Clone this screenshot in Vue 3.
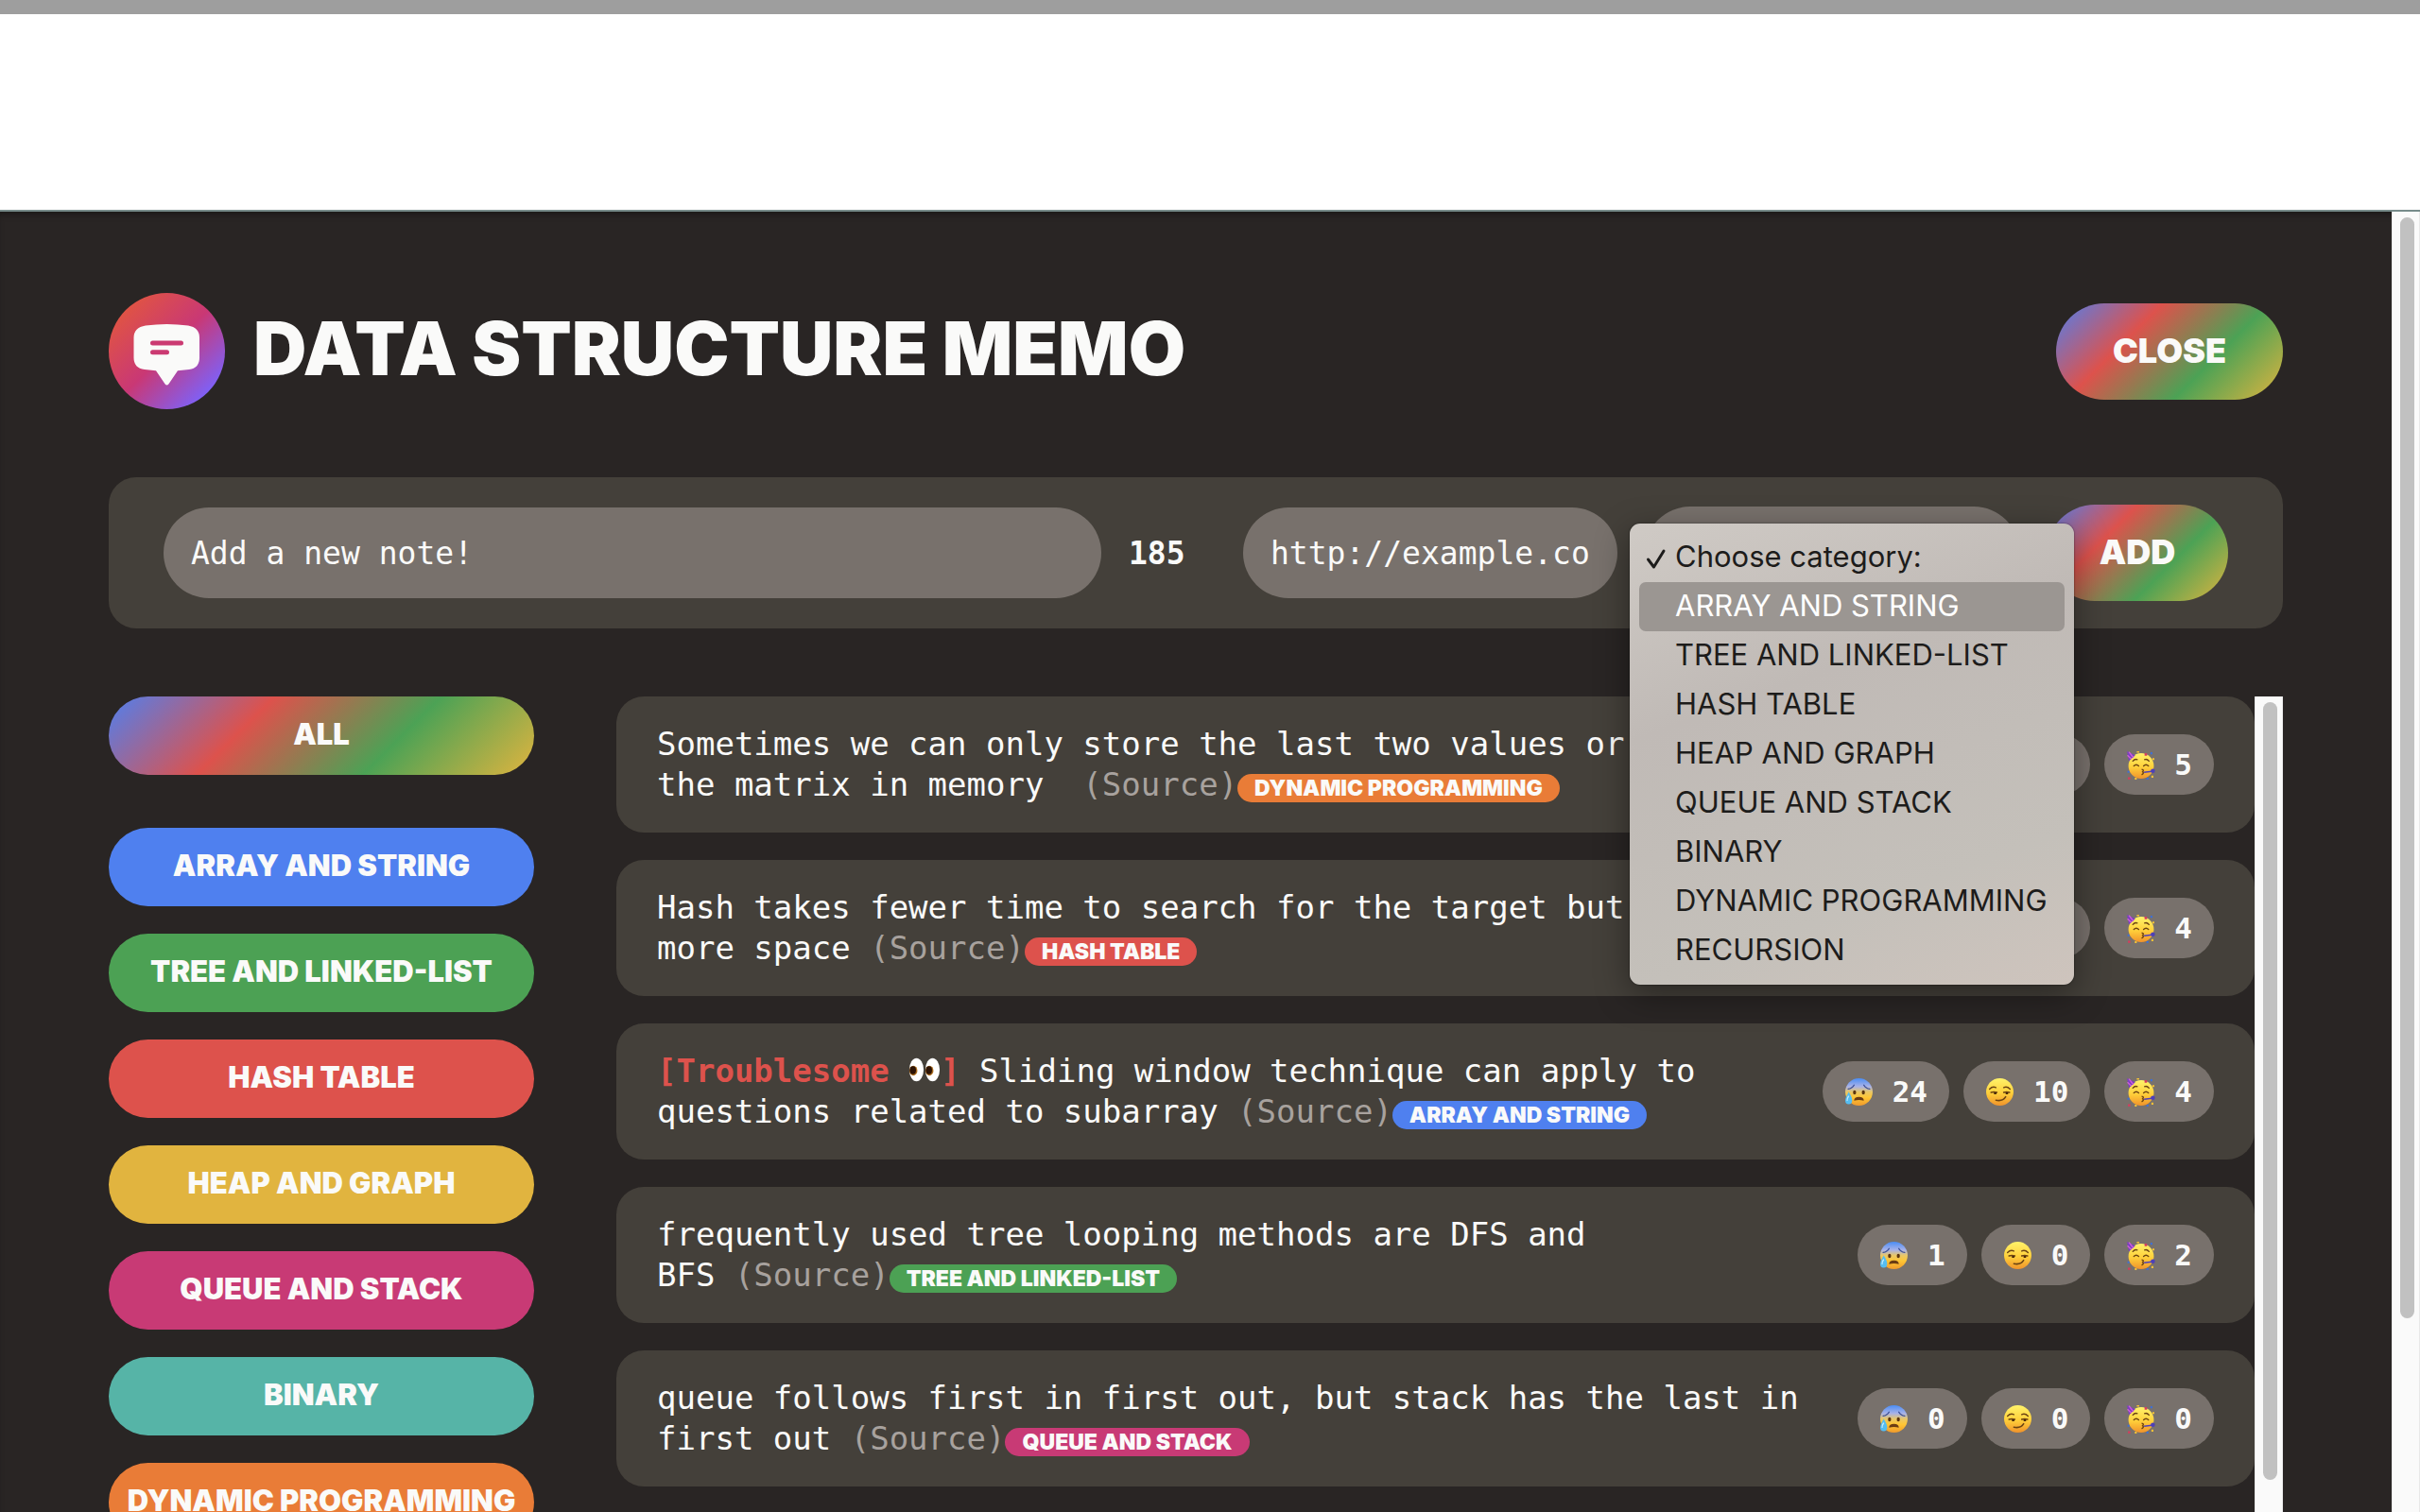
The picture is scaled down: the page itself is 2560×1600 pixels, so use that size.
<script setup>
import { ref } from 'vue'

const categories = [
  { name: 'ARRAY AND STRING', color: '#4f80ef' },
  { name: 'TREE AND LINKED-LIST', color: '#4ca154' },
  { name: 'HASH TABLE', color: '#dd524c' },
  { name: 'HEAP AND GRAPH', color: '#e1b43f' },
  { name: 'QUEUE AND STACK', color: '#c83a75' },
  { name: 'BINARY', color: '#56b4a7' },
  { name: 'DYNAMIC PROGRAMMING', color: '#e97c37' },
  { name: 'RECURSION', color: '#8b5cf6' },
]
const colorOf = (name) => categories.find((c) => c.name === name).color

const notes = [
  { text: 'Sometimes we can only store the last two values or\nthe matrix in memory\u00a0', category: 'DYNAMIC PROGRAMMING', votes: [9, 7, 5] },
  { text: 'Hash takes fewer time to search for the target but\nmore space', category: 'HASH TABLE', votes: [3, 6, 4] },
  { text: 'Sliding window technique can apply to\nquestions related to subarray', category: 'ARRAY AND STRING', votes: [24, 10, 4], troublesome: true },
  { text: 'frequently used tree looping methods are DFS and\nBFS', category: 'TREE AND LINKED-LIST', votes: [1, 0, 2] },
  { text: 'queue follows first in first out, but stack has the last in\nfirst out', category: 'QUEUE AND STACK', votes: [0, 0, 0] },
]
const faces = [
  { id: 'face-worried', label: 'Troublesome' },
  { id: 'face-smirk', label: 'Easy' },
  { id: 'face-party', label: 'Great' },
]

const note = ref('')
const link = ref('')
const category = ref('')
</script>

<template>
  <svg class="defs" aria-hidden="true">
    <defs>
      <linearGradient id="g-skin" x1="0" y1="0" x2="0" y2="1">
        <stop offset="0" stop-color="#fff36a" />
        <stop offset="0.55" stop-color="#ffcf3a" />
        <stop offset="1" stop-color="#f0932b" />
      </linearGradient>
      <linearGradient id="g-cold" x1="0" y1="0" x2="0" y2="1">
        <stop offset="0" stop-color="#4a8df5" />
        <stop offset="0.3" stop-color="#a8b2e8" />
        <stop offset="0.5" stop-color="#e9c768" />
        <stop offset="0.7" stop-color="#ffc634" />
        <stop offset="1" stop-color="#f09a2c" />
      </linearGradient>
      <symbol id="face-worried" viewBox="0 0 30 30">
        <circle cx="15" cy="15" r="14" fill="url(#g-cold)" />
        <path d="M4 12q4-.5 6-4M20 8q2 3.500 6 4" fill="none" stroke="#3c4f95" stroke-width="1.300" stroke-linecap="round" />
        <ellipse cx="10.500" cy="15.500" rx="1.600" ry="2.200" fill="#5b3512" />
        <ellipse cx="19.500" cy="15.500" rx="1.600" ry="2.200" fill="#5b3512" />
        <path d="M10 24q0-4 5-4t5 4q-5-1.500-10 0z" fill="#6b3c13" />
        <path d="M4.500 15q4 6 3.500 9a3.500 3.500 0 0 1-7 0q0-3 3.500-9z" fill="#55bdf2" />
        <path d="M4.500 19q-2 3-1.500 5" fill="none" stroke="#c4edff" stroke-width="1.300" />
      </symbol>
      <symbol id="face-smirk" viewBox="0 0 30 30">
        <circle cx="15" cy="15" r="14" fill="url(#g-skin)" />
        <path d="M4.500 12q3-3 6.500-1.500M19 10.500q3.500-1.500 6.500 1.500M6 15.500q3-1 6 0M19 15.500q3-1 6 0" fill="none" stroke="#6b4312" stroke-width="1.400" stroke-linecap="round" />
        <path d="M9 16.500h2.500M21 16.500h2.500" stroke="#4a2a0a" stroke-width="2" />
        <path d="M11 23.500q7 1.500 10-3.500" fill="none" stroke="#6b4312" stroke-width="1.500" stroke-linecap="round" />
      </symbol>
      <symbol id="face-party" viewBox="0 0 30 30">
        <circle cx="15.500" cy="16" r="13" fill="url(#g-skin)" />
        <path d="M1 1l8.500 4-6.500 6z" fill="#7a3fc4" />
        <path d="M3 1.500l4.500 6M1.500 5l4 4" stroke="#cf5fd6" stroke-width="1.300" />
        <path d="M7 11q2-2.500 4.500-1.500M19 9.500q2.500-1 4.500 1.500M8 16q2.500-2.500 5 0M18 16q2.500-2.500 5 0" fill="none" stroke="#6b4312" stroke-width="1.300" stroke-linecap="round" />
        <path d="M16 19.500q3 .5 1 2.500 2 1.500-1 3" fill="none" stroke="#6b4312" stroke-width="1.300" />
        <path d="M18.500 22.500l8-1" stroke="#4e40b8" stroke-width="1.500" />
        <circle cx="27.500" cy="21" r="2.200" fill="#4e40b8" />
        <path d="M11 1h2.500v1.500H11zM27 8h2v2h-2zM9 28h2v2H9zM26 26h2v2h-2z" fill="#f6c436" />
        <path d="M19 3h2.500v2.500H19zM2 27.500h2.500v2.200H2z" fill="#d63c5e" />
        <path d="M25 2h2v2h-2zM1.500 21h2v2h-2zM21 28h2v2h-2z" fill="#3c6fd8" />
      </symbol>
    </defs>
  </svg>

  <div class="page">
    <div class="window-edge"></div>
    <div class="window-blank"></div>

    <div class="viewport">
      <main class="app">
        <header class="header">
          <div class="brand">
            <svg class="logo" viewBox="0 0 123 123" aria-hidden="true">
              <defs>
                <linearGradient id="g-logo" x1="0" y1="0" x2="1" y2="1">
                  <stop offset="0.1" stop-color="#e2563f" />
                  <stop offset="0.5" stop-color="#c93875" />
                  <stop offset="0.87" stop-color="#7c62fb" />
                </linearGradient>
              </defs>
              <circle cx="61.500" cy="61.500" r="61.500" fill="url(#g-logo)" />
              <path d="M39 34.500q22.500-3 45 0 12 2 12 13v21q0 11-11 12.500l-12 1.200-9.500 14q-2 2.500-4 0l-9.500-14L38 81q-11.500-1.500-11.500-12.500v-21q0-11 12.500-13z" fill="#fafaf9" />
              <path d="M46.500 53h30M46.500 62.700h15" stroke="#cb3a72" stroke-width="5" stroke-linecap="round" />
            </svg>
            <h1>DATA STRUCTURE MEMO</h1>
          </div>
          <button type="button" class="rainbow big close">CLOSE</button>
        </header>

        <form class="note-form" @submit.prevent>
          <input v-model="note" class="field note" type="text" placeholder="Add a new note!" aria-label="Note" />
          <span class="counter">185</span>
          <input v-model="link" class="field link" type="text" placeholder="http://example.com" aria-label="Source link" />
          <div class="picker">
            <select v-model="category" class="field" aria-label="Category">
              <option value="">Choose category:</option>
              <option v-for="c in categories" :key="c.name" :value="c.name">{{ c.name }}</option>
            </select>
            <ul class="menu" role="listbox" aria-label="Category">
              <li role="option" aria-selected="true">
                <svg class="check" viewBox="0 0 22 24" aria-hidden="true">
                  <path d="M2.500 13l6 8L19 4" fill="none" stroke="#1d1c1b" stroke-width="3" stroke-linecap="round" stroke-linejoin="round" />
                </svg>
                Choose category:
              </li>
              <li v-for="(c, i) in categories" :key="c.name" role="option" :class="{ active: i === 0 }">{{ c.name }}</li>
            </ul>
          </div>
          <button type="submit" class="rainbow big add">ADD</button>
        </form>

        <div class="content">
          <aside class="filters">
            <button type="button" class="filter all rainbow">ALL</button>
            <button v-for="c in categories" :key="c.name" type="button" class="filter" :style="{ backgroundColor: c.color }">{{ c.name }}</button>
          </aside>

          <section class="notes">
            <ul class="note-list">
              <li v-for="n in notes" :key="n.text" class="card">
                <p><template v-if="n.troublesome"><strong class="flag">[Troublesome <svg class="eyes" viewBox="0 0 36 28" role="img" aria-label="eyes"><ellipse cx="9" cy="14" rx="8" ry="13" fill="#fff" /><ellipse cx="27" cy="14" rx="8" ry="13" fill="#fff" /><ellipse cx="5.500" cy="15" rx="4.500" ry="5.500" fill="#a8691b" /><ellipse cx="23.500" cy="15" rx="4.500" ry="5.500" fill="#a8691b" /><ellipse cx="5" cy="14.500" rx="3.500" ry="4.500" fill="#2c1305" /><ellipse cx="23" cy="14.500" rx="3.500" ry="4.500" fill="#2c1305" /></svg>]</strong>&nbsp;</template>{{ n.text }} <a href="#" class="source">(Source)</a><span class="tag" :style="{ backgroundColor: colorOf(n.category) }">{{ n.category }}</span></p>
                <div class="votes">
                  <button v-for="(f, i) in faces" :key="f.id" type="button" class="vote" :aria-label="f.label">
                    <svg class="face" aria-hidden="true"><use :href="'#' + f.id" /></svg>
                    <strong>{{ n.votes[i] }}</strong>
                  </button>
                </div>
              </li>
            </ul>
            <div class="scrollbar"><div class="thumb list-thumb"></div></div>
          </section>
        </div>
      </main>
      <div class="scrollbar"><div class="thumb page-thumb"></div></div>
    </div>
  </div>
</template>

<style>
body {
  background: #292524;
  overflow: hidden;
}
</style>

<style scoped>
.defs {
  position: absolute;
  width: 0;
  height: 0;
}
.page {
  display: flex;
  flex-direction: column;
  height: 100vh;
  overflow: hidden;
  background: #292524;
  color: #fafaf9;
  font-family: "DejaVu Sans Mono", monospace;
}
* {
  box-sizing: border-box;
}
button {
  border: 0;
  color: inherit;
  cursor: pointer;
}
.window-edge {
  flex: none;
  height: 15px;
  background: #9e9e9e;
}
.window-blank {
  flex: none;
  height: 209px;
  background: #fff;
  border-bottom: 2px solid #788c8b;
}
.viewport {
  flex: 1;
  min-height: 0;
  display: flex;
  box-shadow: inset 0 6px 6px -3px #1c1a19;
}
.app {
  flex: 1;
  min-width: 0;
  display: flex;
  flex-direction: column;
  padding: 86px 115px 0;
}
.header {
  display: flex;
  align-items: center;
  justify-content: space-between;
}
.brand {
  display: flex;
  align-items: center;
  gap: 30px;
}
.logo {
  width: 123px;
  height: 123px;
}
h1,
.big,
.filter,
.tag {
  font-family: Inter, "DejaVu Sans", sans-serif;
  font-weight: 900;
}
h1 {
  margin: 0;
  padding-bottom: 6px;
  font-size: 78px;
  line-height: 117px;
  white-space: nowrap;
}
.rainbow {
  background: linear-gradient(135deg, #4f80ef, #dd524c 33%, #4ca255 66%, #e1b43f);
}
.big {
  height: 102px;
  padding: 0 0 2px;
  border-radius: 51px;
  font-size: 36px;
}
.close {
  width: 240px;
}
.add {
  flex: none;
  width: 192px;
}
.note-form {
  display: flex;
  align-items: center;
  gap: 29px;
  margin-top: 72px;
  padding: 29px 58px;
  border-radius: 29px;
  background: #44403a;
}
.field {
  height: 96px;
  padding: 0 29px;
  border: 0;
  border-radius: 48px;
  background: #78716c;
  color: #fafaf9;
  font: 33px "DejaVu Sans Mono", monospace;
}
.field::placeholder {
  color: #fafaf9;
  opacity: 1;
}
.note {
  flex: 1;
  min-width: 0;
}
.counter {
  flex: none;
  width: 92px;
  font-size: 33px;
  font-weight: 700;
}
.link {
  flex: none;
  width: 396px;
}
.picker {
  position: relative;
  flex: none;
  width: 396px;
}
.picker .field {
  display: block;
  width: 100%;
  height: 98px;
  appearance: none;
}
.menu {
  position: absolute;
  z-index: 2;
  top: 18px;
  left: -16px;
  width: 470px;
  margin: 0;
  padding: 10px;
  list-style: none;
  border-radius: 11px;
  background: linear-gradient(160deg, #cfcac5, #c0bab6 35%, #c4c0ba 75%, #cec4bd);
  box-shadow: 0 0 2px #00000099, 0 10px 36px #00000066;
  color: #1d1c1b;
  font: 31px/50px Inter, sans-serif;
}
.menu li {
  position: relative;
  height: 52px;
  padding-left: 38px;
  border-radius: 7px;
  white-space: nowrap;
}
.menu .active {
  background: #9b9692;
  color: #fff;
}
.check {
  position: absolute;
  top: 15px;
  left: 7px;
  width: 22px;
  height: 24px;
}
.content {
  flex: 1;
  min-height: 0;
  display: flex;
  gap: 87px;
  margin-top: 72px;
}
.filters {
  flex: none;
  width: 450px;
  display: flex;
  flex-direction: column;
  gap: 29px;
}
.filter {
  flex: none;
  height: 83px;
  padding: 0 0 4px;
  border-radius: 42px;
  font-size: 31px;
  white-space: nowrap;
}
.all {
  margin-bottom: 27px;
}
.notes {
  flex: 1;
  min-width: 0;
  display: flex;
}
.note-list {
  flex: 1;
  min-width: 0;
  display: flex;
  flex-direction: column;
  gap: 29px;
  margin: 0;
  padding: 0;
  list-style: none;
}
.card {
  display: flex;
  align-items: center;
  justify-content: space-between;
  padding: 29px 43px;
  border-radius: 29px;
  background: #44403a;
}
.card p {
  margin: 0;
  font-size: 34px;
  line-height: 43px;
  white-space: pre-line;
}
.flag {
  color: #dd524c;
}
.eyes {
  width: 34px;
  height: 28px;
  vertical-align: -1px;
}
.source {
  color: #a8a29e;
  text-decoration: none;
}
.tag {
  display: inline-block;
  padding: 0 18px;
  border-radius: 15px;
  font-size: 23px;
  line-height: 30px;
  vertical-align: baseline;
}
.votes {
  flex: none;
  display: flex;
  gap: 15px;
}
.vote {
  display: flex;
  align-items: center;
  gap: 20px;
  height: 64px;
  padding: 0 23px;
  border-radius: 32px;
  background: #78716c;
  font: 31px "DejaVu Sans Mono", monospace;
}
.face {
  width: 31px;
  height: 31px;
}
.scrollbar {
  flex: none;
  width: 30px;
  padding: 6px 5px 0 8px;
  background: #fafafa;
  border-left: 1px solid #e8e8e8;
  border-right: 1px solid #e8e8e8;
}
.thumb {
  border-radius: 8px;
  background: #c1c1c1;
}
.list-thumb {
  height: 96%;
}
.page-thumb {
  height: 85%;
}
</style>
